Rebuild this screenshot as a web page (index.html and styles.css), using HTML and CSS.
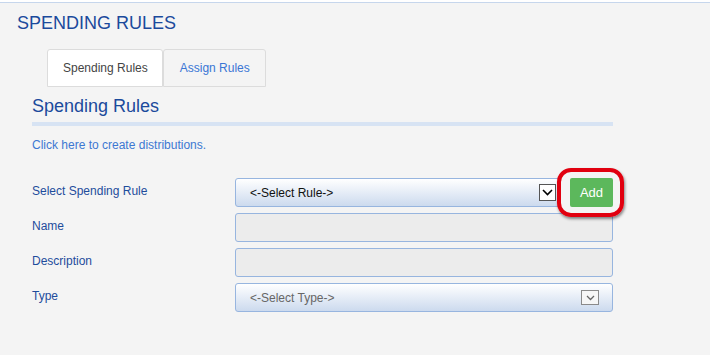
FILE: index.html
```html
<!DOCTYPE html>
<html lang="en">
<head>
    <meta charset="UTF-8">
    <title>Spending Rules</title>
    <link rel="stylesheet" href="styles.css">
</head>
<body>

<div class="page">
    <h1 class="page-title">SPENDING RULES</h1>

    <div class="tabs">
        <div class="tab active">Spending Rules</div>
        <div class="tab">Assign Rules</div>
    </div>

    <div class="panel">
        <h2 class="panel-title">Spending Rules</h2>
        <div class="panel-bar"></div>
        <a class="link">Click here to create distributions.</a>

        <div class="form">
            <label class="label">Select Spending Rule</label>
            <div class="control with-add">
                <div class="select select-rule">
                    <span class="select-text">&lt;-Select Rule-&gt;</span>
                    <span class="arrow dark">
                        <svg width="11" height="7" viewBox="0 0 11 7"><path d="M1 1 L5.5 5.5 L10 1" fill="none" stroke="#000" stroke-width="1.6"/></svg>
                    </span>
                </div>
                <div class="add-wrap">
                    <button class="btn-add">Add</button>
                    <span class="highlight"></span>
                </div>
            </div>

            <label class="label">Name</label>
            <div class="control"><div class="input"></div></div>

            <label class="label">Description</label>
            <div class="control"><div class="input"></div></div>

            <label class="label">Type</label>
            <div class="control">
                <div class="select">
                    <span class="select-text muted">&lt;-Select Type-&gt;</span>
                    <span class="arrow light">
                        <svg width="9" height="6" viewBox="0 0 9 6"><path d="M1 1 L4.5 4.5 L8 1" fill="none" stroke="#666" stroke-width="1.3"/></svg>
                    </span>
                </div>
            </div>
        </div>
    </div>
</div>

</body>
</html>
```

FILE: styles.css
```css
body {
    margin: 0;
    font-family: "Liberation Sans", Arial, sans-serif;
    background-color: #f4f4f4;
}
.page {
    border-top: 2px solid #fff;
    height: 352px;
    box-sizing: border-box;
    position: relative;
}
.page::before {
    content: "";
    display: block;
    height: 1px;
    background-color: #c6d6ec;
}
.page-title {
    margin: 0;
    padding: 10px 0 0 17px;
    font-size: 18px;
    font-weight: normal;
    line-height: 21px;
    color: #1b4a9c;
}
.tabs {
    display: flex;
    margin: 15px 0 0 47px;
}
.tab {
    height: 36px;
    line-height: 36px;
    padding: 0 15px 0 16px;
    font-size: 12px;
    color: #3a76d4;
    border: 1px solid #dcdcdc;
    border-radius: 3px 3px 0 0;
    background-color: #f4f4f4;
}
.tab.active {
    color: #444;
    background-color: #fff;
    padding: 0 14px 0 15px;
}
.panel {
    padding: 0 0 0 32px;
    width: 581px;
}
.panel-title {
    margin: 0;
    padding-top: 9px;
    font-size: 18px;
    font-weight: normal;
    line-height: 21px;
    color: #1b4a9c;
}
.panel-bar {
    height: 4px;
    margin-top: 5px;
    background-color: #d7e3f3;
}
.link {
    display: block;
    margin-top: 12px;
    font-size: 12px;
    line-height: 14px;
    color: #3d78d2;
}
.form {
    display: grid;
    grid-template-columns: 203px 1fr;
    row-gap: 6px;
    margin-top: 26px;
}
.label {
    display: flex;
    align-items: center;
    font-size: 12px;
    color: #1e4c9c;
    padding-bottom: 3px;
}
.control {
    display: flex;
    align-items: center;
    height: 29px;
}
.input,
.select {
    flex: 1;
    height: 29px;
    box-sizing: border-box;
    border: 1px solid #97b5df;
    border-radius: 3px;
}
.input {
    background-color: #ececec;
}
.select {
    display: flex;
    align-items: center;
    justify-content: space-between;
    padding: 0 13px 0 14px;
    background: linear-gradient(#ffffff, #ccdaee);
}
.select-rule {
    flex: none;
    width: 326px;
    padding-right: 4px;
    border-radius: 3px 0 0 3px;
}
.select-text {
    font-size: 12px;
    color: #111;
}
.select-text.muted {
    color: #666;
}
.arrow {
    display: flex;
    align-items: center;
    justify-content: center;
    box-sizing: border-box;
}
.arrow.dark {
    width: 17px;
    height: 17px;
    border: 1px solid #555;
    background-color: #fff;
}
.arrow.light {
    width: 18px;
    height: 15px;
    border: 1px solid #8a8a8a;
    background-color: #f6f6f6;
}
.add-wrap {
    position: relative;
    margin-left: 9px;
}
.btn-add {
    display: block;
    width: 43px;
    height: 29px;
    padding: 0;
    border: none;
    border-radius: 2px;
    background-color: #5cb85c;
    color: #fff;
    font-family: "Liberation Sans", Arial, sans-serif;
    font-size: 13px;
}
.highlight {
    position: absolute;
    left: -13px;
    top: -10px;
    width: 67px;
    height: 49px;
    box-sizing: border-box;
    border: 4px solid #e1000f;
    border-radius: 14px;
    box-shadow: 1px 2px 3px rgba(0, 0, 0, 0.45);
}
```
